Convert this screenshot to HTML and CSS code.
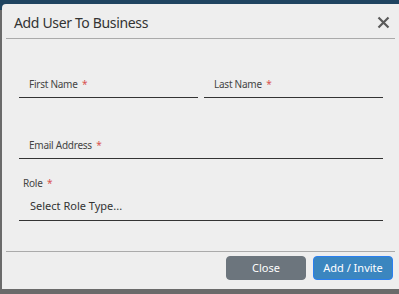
FILE: index.html
```html
<!DOCTYPE html>
<html>
<head>
<meta charset="utf-8">
<link rel="stylesheet" href="styles.css">
</head>
<body>
<div class="backdrop">
  <div class="dialog">
    <div class="header">
      <h1 class="title">Add User To Business</h1>
      <button class="close-x" aria-label="Close">
        <svg width="13" height="13" viewBox="0 0 13 13"><path d="M1.5 1.5 L11.5 11.5 M11.5 1.5 L1.5 11.5" stroke="#5a5a5a" stroke-width="2.2" fill="none"/></svg>
      </button>
    </div>
    <div class="body">
      <div class="row two">
        <div class="field"><label class="lbl">First Name <span class="req">*</span></label></div>
        <div class="field"><label class="lbl">Last Name <span class="req">*</span></label></div>
      </div>
      <div class="row email">
        <div class="field"><label class="lbl">Email Address <span class="req">*</span></label></div>
      </div>
      <div class="role">
        <div class="role-lbl">Role <span class="req">*</span></div>
        <div class="select">Select Role Type...</div>
      </div>
    </div>
    <div class="footer">
      <button class="btn btn-close">Close</button>
      <button class="btn btn-add">Add / Invite</button>
    </div>
  </div>
</div>
</body>
</html>
```
FILE: styles.css
```css
html, body { margin: 0; padding: 0; }
body {
  font-family: "Noto Sans", "Open Sans", sans-serif;
  width: 399px; height: 294px; overflow: hidden;
}
.backdrop {
  height: 294px;
  background: linear-gradient(#1f4460 0 10px, #6a6a6a 10px);
  padding: 4px 0 0 2px;
  box-sizing: border-box;
}
.dialog {
  background: #eeeeee;
  height: 285px;
  border-top-left-radius: 4px;
  display: flex;
  flex-direction: column;
  padding: 0 4px 0 4px;
  box-sizing: border-box;
}
.header {
  display: flex;
  align-items: center;
  justify-content: space-between;
  height: 34px;
  border-bottom: 1px solid #aaaaaa;
  padding: 0 5px 0 8px;
}
.title {
  margin: 0;
  font-size: 14px;
  letter-spacing: -0.35px;
  font-weight: 400;
  color: #333;
  padding-top: 3px;
}
.close-x { background: none; border: 0; padding: 0; display: flex; margin-top: 2px; }
.body { flex: 1; padding: 0 12px 0 13px; }
.row { display: flex; gap: 6px; }
.field { flex: 1; border-bottom: 1.5px solid #333; }
.row.two { margin-top: 38px; }
.row.email { margin-top: 40px; }
.lbl {
  display: block;
  font-size: 10px;
  letter-spacing: -0.25px;
  color: #444;
  padding: 0 0 6px 10px;
}
.req { color: #d9534f; margin-left: 2px; }
.role { margin-top: 17px; border-bottom: 1.5px solid #333; }
.role-lbl { font-size: 10px; letter-spacing: -0.2px; color: #444; padding-left: 4px; }
.select { font-size: 11px; color: #333; padding: 8px 0 7px 11px; }
.footer {
  height: 38px;
  border-top: 1px solid #aaaaaa;
  display: flex;
  justify-content: flex-end;
  align-items: center;
  gap: 7px;
  padding: 0 2px 6px 0;
  box-sizing: border-box;
}
.btn {
  width: 80px; height: 24px;
  border-radius: 4px;
  font-family: inherit;
  font-size: 11px;
  color: #fff;
  border: 1px solid transparent;
  padding: 0;
}
.btn-close { background: #6c757d; border-color: #6c757d; }
.btn-add { background: #3b86bf; border-color: #2a7ff0; }
```
